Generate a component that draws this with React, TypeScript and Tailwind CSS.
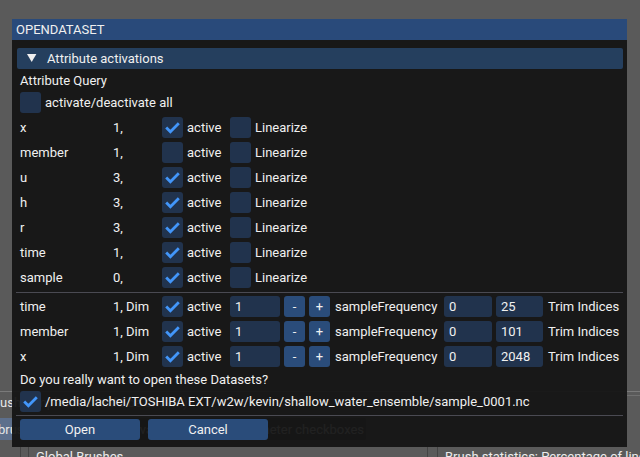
import React from "react";

const FONT = "font-[family-name:Roboto,'Liberation_Sans',sans-serif]";

function Check({ checked }: { checked: boolean }) {
  return (
    <div className="w-[21px] h-[21px] rounded-[3px] bg-[#21334d] shrink-0 relative">
      {checked && (
        <svg width="21" height="21" viewBox="0 0 21 21" className="absolute left-0 top-0">
          <path d="M4.2 10.5 L8.4 14.7 L16.8 6.3" stroke="#4296fa" strokeWidth="2.8" fill="none" strokeLinejoin="miter" strokeLinecap="butt" />
        </svg>
      )}
    </div>
  );
}

function Input({ value, w }: { value: string; w: string }) {
  return (
    <div className={`${w} h-[21px] rounded-[3px] bg-[#21334d] shrink-0 flex items-center pl-[5px] text-[#f0f0f0]`}>
      {value}
    </div>
  );
}

function SmallBtn({ label }: { label: string }) {
  return (
    <div className="w-[21px] h-[21px] rounded-[3px] bg-[#2a4c7a] shrink-0 flex items-center justify-center text-[#f0f0f0]">
      {label}
    </div>
  );
}

const attrs: [string, string, boolean][] = [
  ["x", "1,", true],
  ["member", "1,", false],
  ["u", "3,", true],
  ["h", "3,", true],
  ["r", "3,", true],
  ["time", "1,", true],
  ["sample", "0,", true],
];

const dims: [string, string, string][] = [
  ["time", "1", "25"],
  ["member", "1", "101"],
  ["x", "1", "2048"],
];

export default function App() {
  return (
    <div className={`relative w-[640px] h-[457px] overflow-hidden bg-[#5a5a5a] ${FONT} text-[13px] leading-[15px]`}>
      {/* underlying application (behind the modal) */}
      <div className="absolute left-0 top-[391px] w-[640px] h-px bg-[#7a7a7a]" />
      <div className="absolute left-[627px] top-[395px] w-[13px] h-px bg-[#707070]" />
      <div className="absolute left-0 top-[395px] text-[#e8e8e8] whitespace-nowrap">ush templates should be shown)</div>
      <div className="absolute left-[-20px] top-[418px] w-[70px] h-[22px] bg-[#5d6f8c] rounded-[2px]" />
      <div className="absolute left-[-2px] top-[422px] text-[#e8e8e8] whitespace-nowrap">brushes</div>
      <div className="absolute left-[110px] top-[418px] w-[256px] h-[22px] bg-[#3a3a3a] rounded-[2px]" />
      <div className="absolute left-[117px] top-[422px] text-[#e8e8e8] whitespace-nowrap">Activate/deactivate parameter checkboxes</div>
      <div className="absolute left-[20px] top-[447px] w-px h-[10px] bg-[#444444]" />
      <div className="absolute left-[28px] top-[447px] w-px h-[10px] bg-[#444444]" />
      <div className="absolute left-[36px] top-[449px] text-[#ececec] whitespace-nowrap">Global Brushes</div>
      <div className="absolute left-[427px] top-[447px] w-px h-[10px] bg-[#444444]" />
      <div className="absolute left-[437px] top-[447px] w-px h-[10px] bg-[#444444]" />
      <div className="absolute left-[445px] top-[449px] text-[#ececec] whitespace-nowrap">Brush statistics: Percentage of lines</div>

      {/* modal window */}
      <div className="absolute left-[12px] top-[19px] w-[615px] h-[428px] bg-[rgba(20,20,20,0.94)] flex flex-col text-[#f0f0f0]">
        <div className="h-[21px] bg-[#294a7a] flex items-center pl-[4px] shrink-0">OPENDATASET</div>
        <div className="flex flex-col pl-[8px] pr-[8px] pt-[8px]">
          <div className="h-[21px] -ml-[3px] -mr-[4px] bg-[#253f5e] rounded-[2px] flex items-center relative">
            <svg width="10" height="9" viewBox="0 0 10 9" className="absolute left-[10px] top-[6px]">
              <path d="M0 0 L9.4 0 L4.7 8 Z" fill="#f0f0f0" />
            </svg>
            <span className="ml-[30px]">Attribute activations</span>
          </div>
          <div className="mt-[4px] h-[15px] flex items-center">Attribute Query</div>
          <div className="mt-[4px] h-[21px] flex items-center">
            <Check checked={false} />
            <span className="ml-[4px]">activate/deactivate all</span>
          </div>
          {attrs.map(([name, val, on]) => (
            <div key={name} className="mt-[4px] h-[21px] flex items-center">
              <span className="w-[93px] shrink-0">{name}</span>
              <span className="w-[49px] shrink-0">{val}</span>
              <Check checked={on} />
              <span className="ml-[4px] w-[43px] shrink-0">active</span>
              <Check checked={false} />
              <span className="ml-[4px]">Linearize</span>
            </div>
          ))}
          <div className="mt-[4px] h-px -ml-[4px] -mr-[4px] bg-[#4a4a52]" />
          <div className="mt-[3px]" />
          {dims.map(([name, lo, hi], i) => (
            <div key={name} className={`${i === 0 ? "" : "mt-[4px]"} h-[21px] flex items-center`}>
              <span className="w-[93px] shrink-0">{name}</span>
              <span className="w-[49px] shrink-0">1, Dim</span>
              <Check checked={true} />
              <span className="ml-[4px] w-[43px] shrink-0">active</span>
              <Input value={lo} w="w-[50px]" />
              <div className="ml-[4px]"><SmallBtn label="-" /></div>
              <div className="ml-[4px]"><SmallBtn label="+" /></div>
              <span className="ml-[5px] w-[109px] shrink-0">sampleFrequency</span>
              <Input value="0" w="w-[48px]" />
              <div className="ml-[4px]"><Input value={hi} w="w-[47px]" /></div>
              <span className="ml-[5px] whitespace-nowrap">Trim Indices</span>
            </div>
          ))}
          <div className="mt-[4px] h-[16px] flex items-center">Do you really want to open these Datasets?</div>
          <div className="mt-[4px] h-[21px] flex items-center">
            <Check checked={true} />
            <span className="ml-[4px] whitespace-nowrap">/media/lachei/TOSHIBA EXT/w2w/kevin/shallow_water_ensemble/sample_0001.nc</span>
          </div>
          <div className="mt-[3px] h-px -ml-[4px] -mr-[4px] bg-[#4a4a52]" />
          <div className="mt-[3px] h-[21px] flex items-center">
            <div className="w-[120px] h-[21px] rounded-[3px] bg-[#2a4c7a] flex items-center justify-center">Open</div>
            <div className="ml-[8px] w-[120px] h-[21px] rounded-[3px] bg-[#2a4c7a] flex items-center justify-center">Cancel</div>
          </div>
        </div>
      </div>
    </div>
  );
}
